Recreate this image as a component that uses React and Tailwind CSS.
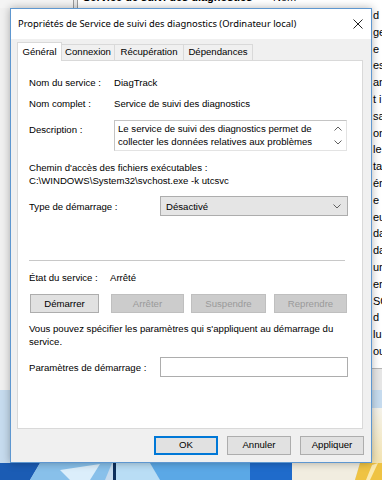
import React from 'react'

const FONT = { fontFamily: '"Liberation Sans", Arial, sans-serif' }
const TITLE_FONT = { fontFamily: '"Noto Sans", "Liberation Sans", sans-serif' }

const sideRows = ['d', 'ge', 'e', 'es', 'an', 't i', 'sat', 'on', 'le', 'ta', 'éri', 'e', 'eu', 'da', 'da', 'ur', 'er', 'SC', 'd', 'lu', 'ou']

function Chevron({ up, className }) {
  return (
    <svg width="8" height="5" viewBox="0 0 8 5" className={className}>
      <path d={up ? 'M0.5 4.5 L4 1 L7.5 4.5' : 'M0.5 0.5 L4 4 L7.5 0.5'} fill="none" stroke="#606060" strokeWidth="1" />
    </svg>
  )
}

function Wallpaper() {
  return (
    <svg width="382" height="90" viewBox="0 0 382 90" className="block">
      <rect width="382" height="90" fill="#c6dbee" />
      <polygon points="0,73 40,73 30,90 0,90" fill="#1b5cb4" />
      <polygon points="40,73 112,73 105,90 30,90" fill="#88c0ea" />
      <polygon points="60,80 100,74 90,90 70,90" fill="#dbeefb" />
      <rect x="113" y="73" width="3" height="17" fill="#0d2f5c" />
      <polygon points="116,73 150,73 160,90 116,90" fill="#b9ddf5" />
      <polygon points="150,73 250,73 250,90 160,90" fill="#5ba8e6" />
      <polygon points="250,73 292,73 292,90 250,90" fill="#1f6bcb" />
      <polygon points="292,73 360,73 355,90 292,90" fill="#f1ede0" />
      <polygon points="360,73 382,73 382,90 355,90" fill="#efc343" />
      <polygon points="372,75 378,73 370,90 366,90" fill="#fbeab0" />
    </svg>
  )
}

function Btn({ children, disabled, primary, className = '' }) {
  const base = 'h-[19px] flex items-center justify-center text-[9.6px] border'
  let tone = 'bg-[#e1e1e1] border-[#adadad] text-black'
  if (disabled) tone = 'bg-[#cccccc] border-[#bfbfbf] text-[#9a9a9a]'
  if (primary) tone = 'bg-[#e1e1e1] border-[#0078d7] text-black ring-1 ring-inset ring-[#0078d7]'
  return <div className={`${base} ${tone} ${className}`}>{children}</div>
}

export default function App() {
  return (
    <div className="relative w-[382px] h-[480px] overflow-hidden bg-[#f0f0f0]" style={FONT}>
      {/* background: services list window */}
      <div className="absolute inset-x-0 top-0 h-[8px] bg-white flex">
        <div className="w-[73px] bg-[#f4f4f4]" />
        <div className="w-[5px] border-x border-[#9a9a9a] bg-[#e8e8e8]" />
        <div className="relative flex-1 bg-white">
          <span className="absolute left-[5px] top-[-9px] text-[11px] font-bold text-black leading-[13px]">Service de suivi des diagnostics</span>
          <span className="absolute left-[195px] top-[-9px] text-[11px] text-black leading-[13px]">Nom</span>
        </div>
      </div>
      <div className="absolute left-[372px] top-0 w-[10px] h-[368px] bg-white overflow-hidden pt-[8px]">
        {sideRows.map((r, i) => (
          <div key={i} className="h-[16.8px] leading-[14px] text-[11px] text-black pl-[1px] whitespace-nowrap">{r}</div>
        ))}
      </div>
      <div className="absolute left-[372px] top-[368px] w-[10px] h-[40px] bg-[#e6e6e6] border-t border-[#b5b5b5]" />
      <div className="absolute left-0 top-[395px] w-[10px] h-[24px] bg-[#f3f3f3] border-y border-[#b8b8b8]" />
      <div className="absolute left-0 bottom-0">
        <Wallpaper />
      </div>
      <div className="absolute left-[372px] top-[408px] w-[10px] h-[55px] bg-gradient-to-b from-[#f4f2ea] to-[#f3e3b0]" />

      {/* dialog */}
      <div className="absolute left-[10px] top-[8px] w-[362px] h-[455px] bg-[#f0f0f0] border border-[#5e97d0] shadow-[0_0_8px_rgba(0,0,0,0.3)] flex flex-col">
        <div className="h-[30px] bg-white flex items-center pl-[7px] pr-[8px] shrink-0">
          <span className="text-[9.4px] text-black flex-1 whitespace-nowrap" style={TITLE_FONT}>
            Propriétés de Service de suivi des diagnostics (Ordinateur local)
          </span>
          <svg width="10" height="10" viewBox="0 0 10 10">
            <path d="M0.5 0.5 L9.5 9.5 M9.5 0.5 L0.5 9.5" stroke="#222" strokeWidth="1" />
          </svg>
        </div>

        <div className="px-[6px] pt-[3px]">
          {/* tabs */}
          <div className="flex items-end h-[18px] relative z-10 text-[9.6px]">
            <div className="w-[45px] h-[19px] -mb-px bg-white border border-b-0 border-[#d9d9d9] flex items-center justify-center">Général</div>
            <div className="w-[53px] h-[16px] bg-[#f0f0f0] border border-l-0 border-b-0 border-[#d9d9d9] flex items-center justify-center">Connexion</div>
            <div className="w-[69px] h-[16px] bg-[#f0f0f0] border border-l-0 border-b-0 border-[#d9d9d9] flex items-center justify-center">Récupération</div>
            <div className="w-[69px] h-[16px] bg-[#f0f0f0] border border-l-0 border-b-0 border-[#d9d9d9] flex items-center justify-center">Dépendances</div>
          </div>

          {/* panel */}
          <div className="w-[346px] h-[369px] bg-white border border-[#d9d9d9] pt-[14px] pl-[11px] text-[9.6px] text-black leading-[13px]">
            <div className="flex h-[14px] items-center">
              <span className="w-[85px]">Nom du service :</span>
              <span>DiagTrack</span>
            </div>
            <div className="flex h-[14px] items-center mt-[7px]">
              <span className="w-[85px]">Nom complet :</span>
              <span>Service de suivi des diagnostics</span>
            </div>
            <div className="flex mt-[10px]">
              <span className="w-[85px] pt-[3px]">Description :</span>
              <div className="w-[233px] h-[31px] border border-[#c4c4c4] border-r-[#e3e3e3] border-b-[#e3e3e3] flex pl-[3px]">
                <div className="flex-1 leading-[13px] pt-px pr-[6px]">
                  Le service de suivi des diagnostics permet de collecter les données relatives aux problèmes
                </div>
                <div className="w-[16px] flex flex-col items-center justify-between py-[5px]">
                  <Chevron up />
                  <Chevron />
                </div>
              </div>
            </div>
            <div className="mt-[10px] h-[13px]">Chemin d'accès des fichiers exécutables :</div>
            <div className="h-[13px]">C:\WINDOWS\System32\svchost.exe -k utcsvc</div>
            <div className="flex items-center mt-[9px]">
              <span className="w-[131px]">Type de démarrage :</span>
              <div className="w-[188px] h-[20px] bg-[#e5e5e5] border border-[#adadad] flex items-center pl-[5px] pr-[6px]">
                <span className="flex-1">Désactivé</span>
                <Chevron />
              </div>
            </div>
            <div className="mt-[44px] w-[316px] border-t border-[#c8c8c8]" />
            <div className="flex h-[14px] items-center mt-[9px]">
              <span className="w-[81px]">État du service :</span>
              <span>Arrêté</span>
            </div>
            <div className="flex mt-[10px]">
              <Btn className="w-[69px] ml-px">Démarrer</Btn>
              <Btn disabled className="w-[73px] ml-[12px]">Arrêter</Btn>
              <Btn disabled className="w-[75px] ml-[7px]">Suspendre</Btn>
              <Btn disabled className="w-[73px] ml-[8px]">Reprendre</Btn>
            </div>
            <div className="mt-[9px] w-[316px]">
              Vous pouvez spécifier les paramètres qui s'appliquent au démarrage du service.
            </div>
            <div className="flex items-center mt-[9px]">
              <span className="w-[131px]">Paramètres de démarrage :</span>
              <div className="w-[188px] h-[20px] bg-white border border-[#adadad]" />
            </div>
          </div>

          {/* footer buttons */}
          <div className="flex justify-end gap-[9px] mt-[7px] pr-[1px]">
            <Btn primary className="w-[64px]">OK</Btn>
            <Btn className="w-[64px]">Annuler</Btn>
            <Btn className="w-[64px]">Appliquer</Btn>
          </div>
        </div>
      </div>
    </div>
  )
}
